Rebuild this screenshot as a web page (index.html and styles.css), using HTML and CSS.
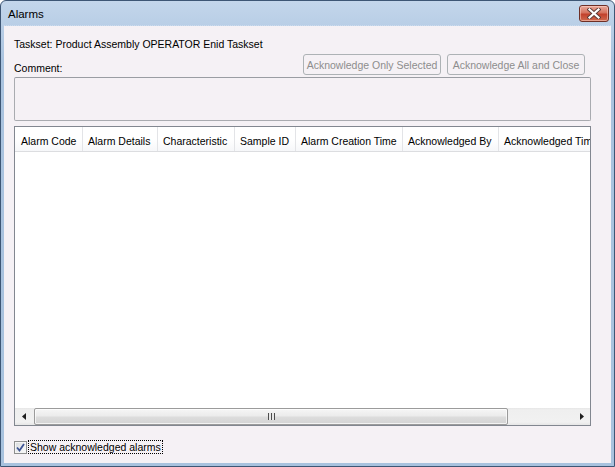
FILE: index.html
```html
<!DOCTYPE html>
<html lang="en">
<head>
  <meta charset="UTF-8">
  <title>Alarms</title>
  <link rel="stylesheet" href="styles.css">
</head>
<body>

  <!-- Ventana de alarmas -->
  <div class="window">
    <div class="titlebar">
      <span class="title">Alarms</span>
      <button class="close" type="button">
        <svg width="14" height="11" viewBox="0 0 14 11">
          <path d="M2.5 1.5 L11.5 9.5 M11.5 1.5 L2.5 9.5" stroke="#5a3a36" stroke-width="4" stroke-linecap="square"/>
          <path d="M2.5 1.5 L11.5 9.5 M11.5 1.5 L2.5 9.5" stroke="#ffffff" stroke-width="2.2" stroke-linecap="square"/>
        </svg>
      </button>
    </div>

    <div class="client">
      <div class="taskset">Taskset: Product Assembly OPERATOR Enid Taskset</div>

      <div class="comment-row">
        <label for="comment">Comment:</label>
        <div class="actions">
          <button type="button" disabled>Acknowledge Only Selected</button>
          <button type="button" disabled>Acknowledge All and Close</button>
        </div>
      </div>

      <div class="comment" id="comment"></div>

      <!-- Lista de alarmas -->
      <div class="grid">
        <div class="header">
          <div class="col c1">Alarm Code</div>
          <div class="col c2">Alarm Details</div>
          <div class="col c3">Characteristic</div>
          <div class="col c4">Sample ID</div>
          <div class="col c5">Alarm Creation Time</div>
          <div class="col c6">Acknowledged By</div>
          <div class="col c7">Acknowledged Tim</div>
        </div>
        <div class="rows"></div>
        <div class="hscroll">
          <div class="arrow">
            <svg width="4" height="7" viewBox="0 0 4 7"><path d="M4 0 L0 3.5 L4 7 Z" fill="#1f1f1f"/></svg>
          </div>
          <div class="track">
            <div class="thumb"><span class="grip"></span></div>
          </div>
          <div class="arrow">
            <svg width="4" height="7" viewBox="0 0 4 7"><path d="M0 0 L4 3.5 L0 7 Z" fill="#1f1f1f"/></svg>
          </div>
        </div>
      </div>

      <label class="show">
        <span class="check">
          <svg width="9" height="9" viewBox="0 0 9 9">
            <path d="M1 4.5 L3.5 7.5 L8 1" fill="none" stroke="#3f5595" stroke-width="1.8"/>
          </svg>
        </span>
        <span class="focus">Show acknowledged alarms</span>
      </label>
    </div>
  </div>

</body>
</html>
```

FILE: styles.css
```css
* {
  box-sizing: border-box;
}

body {
  margin: 0;
  font-family: "Liberation Sans", Arial, sans-serif;
  font-size: 10.5px;
  color: #000;
}

/* Marco de la ventana */
.window {
  width: 615px;
  height: 467px;
  display: flex;
  flex-direction: column;
  background: linear-gradient(#c3d6eb, #aac3df 60px, #a8c2de);
  border: 1px solid #3d5675;
  border-radius: 6px 6px 0 0;
  padding: 0 3px 3px;
}

.titlebar {
  height: 25px;
  display: flex;
  align-items: flex-start;
  justify-content: space-between;
  padding: 0 2px 0 4px;
  border-bottom: 1px dotted #cbdcee;
}

.title {
  font-size: 11.5px;
  line-height: 25px;
  padding-top: 1px;
  color: #000;
}

.close {
  margin-top: 4px;
  width: 30px;
  height: 17px;
  padding: 0;
  border: 1px solid #6e2f26;
  border-radius: 3px;
  background: linear-gradient(#e9a99b, #d5735f 45%, #c2412c 55%, #cf6a4f);
  box-shadow: inset 0 0 0 1px rgba(255, 220, 210, 0.5);
  display: flex;
  align-items: center;
  justify-content: center;
}

/* Area cliente */
.client {
  flex: 1;
  background: #f5f1f5;
  padding: 10px 20px 0 10px;
  display: flex;
  flex-direction: column;
}

.taskset {
  line-height: 14px;
  padding-top: 1px;
}

.comment-row {
  margin-top: 3px;
  height: 21px;
  display: flex;
  justify-content: space-between;
  align-items: flex-end;
}

.comment-row label {
  line-height: 13px;
}

.actions {
  display: flex;
  gap: 6px;
  padding-right: 6px;
}

.actions button {
  width: 138px;
  height: 21px;
  padding: 0;
  font-family: inherit;
  font-size: 10.5px;
  color: #8d8d8d;
  background: #f5f1f5;
  border: 1px solid #adb2b5;
  border-radius: 3px;
  white-space: nowrap;
}

.comment {
  margin-top: 2px;
  height: 44px;
  border: 1px solid #a9abb0;
  border-top-color: #9a9da3;
  border-radius: 2px;
  background: #f5f1f5;
}

/* Tabla */
.grid {
  margin-top: 5px;
  height: 300px;
  border: 1px solid #828790;
  background: #fff;
  display: flex;
  flex-direction: column;
  overflow: hidden;
}

.header {
  height: 25px;
  display: flex;
  border-bottom: 1px solid #dcdde0;
  background: linear-gradient(#ffffff, #ffffff 50%, #f6f7f9);
  overflow: hidden;
}

.col {
  flex-shrink: 0;
  line-height: 20px;
  padding: 4px 0 0 5px;
  white-space: nowrap;
  border-right: 1px solid #e3e4e7;
}

.c1 { width: 68px; padding-left: 6px; }
.c2 { width: 75px; }
.c3 { width: 77px; }
.c4 { width: 61px; }
.c5 { width: 107px; }
.c6 { width: 96px; }
.c7 { flex: 1; border-right: none; overflow: hidden; }

.rows {
  flex: 1;
}

.hscroll {
  height: 17px;
  display: flex;
  background: linear-gradient(#e6e6e6, #efefef 2px, #f1f1f1 14px, #e6e6e6);
}

.arrow {
  width: 17px;
  display: flex;
  align-items: center;
  justify-content: center;
}

.track {
  flex: 1;
  padding: 0 1px 0 2px;
}

.thumb {
  width: 474px;
  height: 17px;
  border: 1px solid #9b9b9b;
  border-radius: 2px;
  background: linear-gradient(#f6f6f6, #ececec 45%, #dcdcdc 55%, #d4d4d4);
  box-shadow: inset 0 0 0 1px rgba(255, 255, 255, 0.7);
  display: flex;
  align-items: center;
  justify-content: center;
}

.grip {
  width: 7px;
  height: 7px;
  background: repeating-linear-gradient(90deg, #4e4e4e 0 1px, #e8e8e8 1px 3px);
}

/* Casilla */
.show {
  margin-top: 14px;
  height: 14px;
  display: flex;
  align-items: center;
  gap: 1px;
}

.check {
  width: 13px;
  height: 13px;
  border: 1px solid #8e8f8f;
  background: linear-gradient(135deg, #d8dadd, #fbfbfc);
  box-shadow: inset 0 0 0 1px #f4f4f4;
  display: flex;
  align-items: center;
  justify-content: center;
}

.focus {
  border: 1px dotted #000;
  line-height: 12px;
  padding: 0 1px;
}
```
